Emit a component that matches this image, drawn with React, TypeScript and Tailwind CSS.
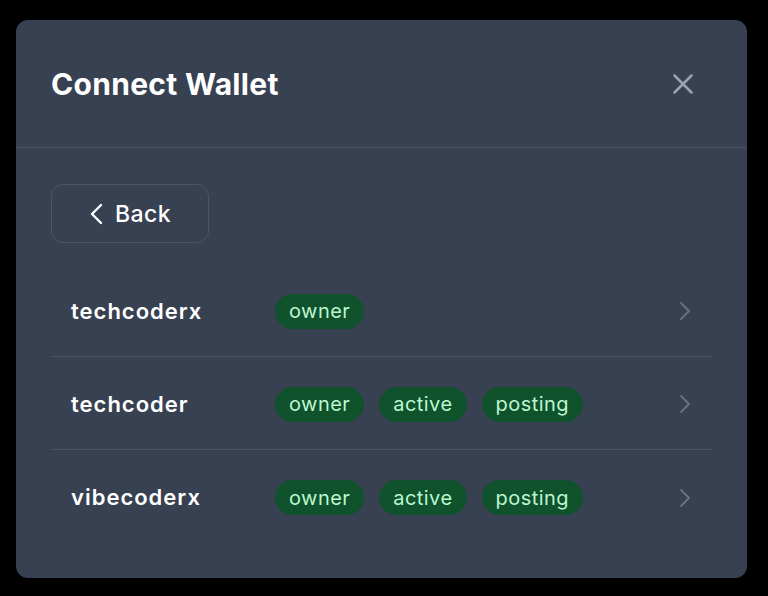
import React from 'react';

type Account = {
  name: string;
  roles: string[];
};

const accounts: Account[] = [
  { name: 'techcoderx', roles: ['owner'] },
  { name: 'techcoder', roles: ['owner', 'active', 'posting'] },
  { name: 'vibecoderx', roles: ['owner', 'active', 'posting'] },
];

const CloseIcon = () => (
  <svg width="24" height="24" viewBox="0 0 24 24" fill="none" stroke="currentColor" strokeWidth="2.5" strokeLinecap="round">
    <path d="M3.5 3.5 20.5 20.5M20.5 3.5 3.5 20.5" />
  </svg>
);

const BackIcon = () => (
  <svg width="16" height="22" viewBox="0 0 16 22" fill="none" stroke="currentColor" strokeWidth="2.4" strokeLinecap="round" strokeLinejoin="round">
    <path d="M12 2 3 11l9 9" />
  </svg>
);

const RowChevron = () => (
  <svg width="14" height="20" viewBox="0 0 14 20" fill="none" stroke="currentColor" strokeWidth="1.8" strokeLinecap="round" strokeLinejoin="round">
    <path d="M3 2l8 8-8 8" />
  </svg>
);

export default function App() {
  return (
    <div className="min-h-[596px] w-full bg-black pt-5 pl-4 pr-[21px] pb-[19px] font-['Inter',sans-serif]">
      <div className="flex w-[731px] flex-col rounded-xl bg-[#374151]">
        {/* header */}
        <div className="flex h-[128px] items-center justify-between border-b border-[#4b5563] pl-[35px] pr-[52px]">
          <h2 className="pt-[2px] text-[30px] font-bold tracking-[0.3px] text-white">Connect Wallet</h2>
          <button className="text-[#9ca3af]">
            <CloseIcon />
          </button>
        </div>

        {/* body */}
        <div className="flex flex-col px-[35px] pt-9 pb-[35px]">
          <button className="flex h-[59px] w-[158px] items-center justify-center gap-[10px] rounded-xl border border-[#4b5563] text-white">
            <BackIcon />
            <span className="pt-[1px] text-[23px] font-medium tracking-[0.4px]">Back</span>
          </button>

          <div className="mt-[21px] flex flex-col">
            {accounts.map((acc, i) => (
              <div
                key={acc.name}
                className={`flex h-[93px] items-center px-5 pt-[2px] ${i < accounts.length - 1 ? 'border-b border-[#4b5563]' : ''}`}
              >
                <span className="w-[204px] shrink-0 text-[22px] font-semibold tracking-[1px] text-white">{acc.name}</span>
                <div className="flex gap-[15px]">
                  {acc.roles.map((r) => (
                    <span
                      key={r}
                      className="flex h-[35px] items-center rounded-full bg-[#0f522b] px-[14px] text-[20px] tracking-[0.45px] text-[#bbf7d0]"
                    >
                      {r}
                    </span>
                  ))}
                </div>
                <span className="ml-auto text-[#6b7280]">
                  <RowChevron />
                </span>
              </div>
            ))}
          </div>
        </div>
      </div>
    </div>
  );
}
